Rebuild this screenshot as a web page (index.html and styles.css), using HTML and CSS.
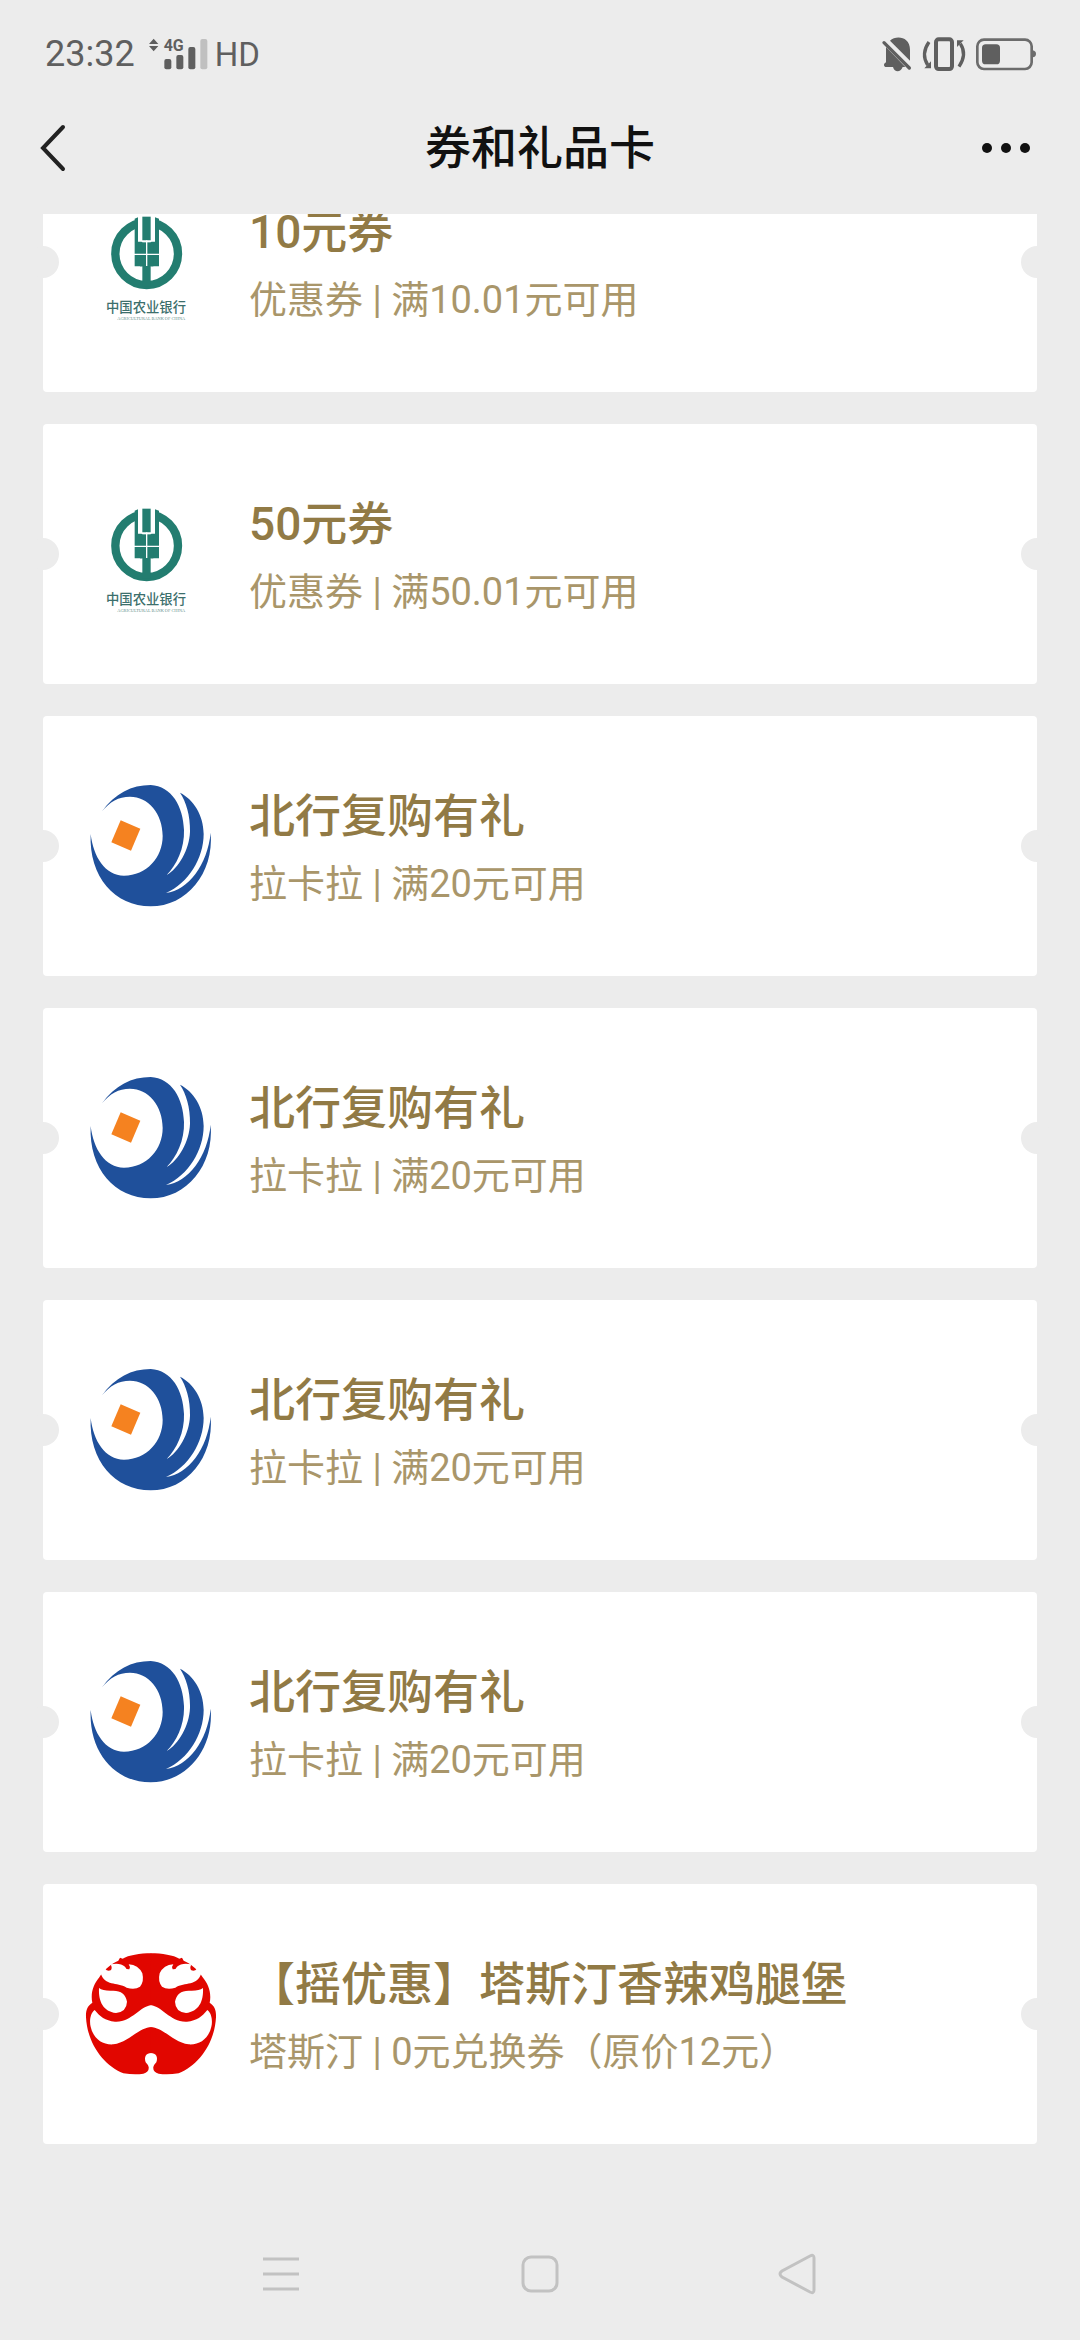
FILE: index.html
```html
<!DOCTYPE html>
<html lang="zh">
<head>
    <meta charset="UTF-8">
    <meta name="viewport" content="width=device-width, initial-scale=1.0">
    <title>券和礼品卡</title>
    <link rel="stylesheet" href="styles.css">
</head>
<body>

    <!-- 卡券图标 -->
    <svg class="sprite" aria-hidden="true">
        <symbol id="logo-abc" viewBox="75 24 396 396">
            <circle cx="260" cy="197" r="94" fill="none" stroke="#237d70" stroke-width="25"/>
            <path fill="#fff" d="M233 78h55v60h-55z"/>
            <path fill="#237d70" d="M224 92l10-4v73h13v74h-23z"/>
            <path fill="#237d70" d="M297 92l-12-4v73h-13v74h25z"/>
            <path fill="#237d70" d="M247 86h25v71h-25z"/>
            <path fill="#237d70" d="M240 163h40v72h-40z"/>
            <path fill="#237d70" d="M247 234h25v61h-25z"/>
            <path fill="none" stroke="#fff" stroke-width="4" d="M260 157v77M222 199h77M245 160h29"/>
            <text x="138" y="373" class="logo-cn">中国农业银行</text>
            <text x="172" y="396" class="logo-en">AGRICULTURAL BANK OF CHINA</text>
        </symbol>
        <symbol id="logo-bank" viewBox="75 60 396 396">
            <path fill="#1f509b" d="M125 155C165 100 215 75 272 75C335 78 370 140 372 210C374 265 350 315 320 345C355 325 388 270 390 215C391 165 378 125 360 98C400 118 431 165 431 222C431 295 385 370 318 399C385 390 442 315 452 218C462 340 380 439 272 439C165 439 86 350 92 222C100 290 135 347 192 347C260 347 308 292 308 228C308 160 265 110 210 110C175 110 150 125 125 155Z"/>
            <path fill="#f58220" d="M182 181L241 206L213 272L154 247Z"/>
        </symbol>
        <symbol id="logo-lion" viewBox="75 54 396 396">
            <g id="lion-face" fill="#e10600">
                <path d="M274 70C240 70 205 76 188 86L180 83L175 92C150 102 125 128 118 142C100 163 91 190 97 218C82 228 77 240 78 262C82 340 130 405 190 430Q225 435 250 431Q268 426 266 411Q264 404 257 397Q253 385 257 377Q262 369 274 369Z"/>
            </g>
            <use href="#lion-face" transform="translate(546 0) scale(-1 1)"/>
            <g id="lion-mask" fill="#fff">
                <path d="M122 130L135 116Q142 125 152 121Q158 115 152 103Q180 97 195 110Q198 119 208 118Q212 110 206 103Q235 105 247 130Q253 155 240 170Q225 180 200 173C170 155 135 170 122 130Z"/>
                <path d="M117 174Q130 184 160 182Q195 182 201 215Q200 245 168 249C130 245 115 215 117 174Z"/>
                <path d="M274 226C240 228 215 278 165 275C135 272 120 260 104 240C90 250 88 275 92 290C100 325 125 345 160 343C205 338 235 293 274 291Z"/>
            </g>
            <use href="#lion-mask" transform="translate(546 0) scale(-1 1)"/>
        </symbol>
    </svg>

    <div class="status-bar">
        <div class="status-left">
            <span class="time">23:32</span>
            <svg class="signal" viewBox="446 114 180 96">
                <path fill="#5f5f5f" d="M446 132l14-16 14 16zM446 138h28l-14 16z"/>
                <text x="490" y="153" class="net">4G</text>
                <rect x="492" y="177" width="21" height="31" rx="6" fill="#5f5f5f"/>
                <rect x="528" y="165" width="21" height="43" rx="6" fill="#5f5f5f"/>
                <rect x="564" y="141" width="21" height="67" rx="6" fill="#5f5f5f"/>
                <rect x="600" y="117" width="21" height="91" rx="6" fill="#c0c0c0"/>
            </svg>
            <span class="hd">HD</span>
        </div>
        <div class="status-right">
            <svg width="30" height="35" viewBox="180 110 90 105">
                <path fill="#5f5f5f" d="M204 121C222 104 264 108 264 148V181ZM192 140L250 200H242Q236 213 227 213Q217 213 213 200H190Q183 196 188 189L192 186Z"/>
                <path stroke="#5f5f5f" stroke-width="10" stroke-linecap="round" d="M186 127L262 203"/>
            </svg>
            <svg width="44" height="35" viewBox="306 110 132 105">
                <rect x="348" y="117" width="48" height="89" rx="8" fill="none" stroke="#5f5f5f" stroke-width="12"/>
                <path fill="none" stroke="#5f5f5f" stroke-width="10" d="M327 125Q302 160 323 194M417 199Q442 162 421 130"/>
                <path fill="#5f5f5f" d="M333 183V204H313ZM411 120H431L411 140Z"/>
            </svg>
            <svg width="61" height="35" viewBox="465 110 183 105">
                <rect x="469" y="118" width="163" height="88" rx="20" fill="none" stroke="#6c6c6c" stroke-width="8"/>
                <rect x="483" y="132" width="54" height="60" rx="11" fill="#5f5f5f"/>
                <path fill="#6c6c6c" d="M635 150Q645 152 645 161Q645 170 635 171Z"/>
            </svg>
        </div>
    </div>

    <header class="header">
        <button class="icon-button" aria-label="返回">
            <svg width="26" height="48" viewBox="0 0 26 48" fill="none" stroke="#222" stroke-width="4" stroke-linecap="round">
                <path d="M23 3L3 24L23 45"/>
            </svg>
        </button>
        <h1>券和礼品卡</h1>
        <button class="icon-button more" aria-label="更多">
            <svg width="50" height="48" viewBox="0 0 50 48" fill="#111">
                <circle cx="6" cy="24" r="5"/>
                <circle cx="25" cy="24" r="5"/>
                <circle cx="44" cy="24" r="5"/>
            </svg>
        </button>
    </header>

    <main class="content">
        <div class="coupon-list">
            <a href="#" class="coupon">
                <svg class="logo"><use href="#logo-abc"/></svg>
                <div class="info">
                    <h2>10元券</h2>
                    <p>优惠券 | 满10.01元可用</p>
                </div>
            </a>
            <a href="#" class="coupon">
                <svg class="logo"><use href="#logo-abc"/></svg>
                <div class="info">
                    <h2>50元券</h2>
                    <p>优惠券 | 满50.01元可用</p>
                </div>
            </a>
            <a href="#" class="coupon">
                <svg class="logo"><use href="#logo-bank"/></svg>
                <div class="info">
                    <h2>北行复购有礼</h2>
                    <p>拉卡拉 | 满20元可用</p>
                </div>
            </a>
            <a href="#" class="coupon">
                <svg class="logo"><use href="#logo-bank"/></svg>
                <div class="info">
                    <h2>北行复购有礼</h2>
                    <p>拉卡拉 | 满20元可用</p>
                </div>
            </a>
            <a href="#" class="coupon">
                <svg class="logo"><use href="#logo-bank"/></svg>
                <div class="info">
                    <h2>北行复购有礼</h2>
                    <p>拉卡拉 | 满20元可用</p>
                </div>
            </a>
            <a href="#" class="coupon">
                <svg class="logo"><use href="#logo-bank"/></svg>
                <div class="info">
                    <h2>北行复购有礼</h2>
                    <p>拉卡拉 | 满20元可用</p>
                </div>
            </a>
            <a href="#" class="coupon">
                <svg class="logo"><use href="#logo-lion"/></svg>
                <div class="info">
                    <h2>【摇优惠】塔斯汀香辣鸡腿堡</h2>
                    <p>塔斯汀 | 0元兑换券（原价12元）</p>
                </div>
            </a>
        </div>
    </main>

    <nav class="nav-bar">
        <button class="icon-button" aria-label="菜单">
            <svg width="40" height="44" viewBox="0 0 40 44"><path d="M2 7H38M2 22H38M2 37H38"/></svg>
        </button>
        <button class="icon-button" aria-label="主页">
            <svg width="40" height="44" viewBox="0 0 40 44"><rect x="3" y="5" width="34" height="34" rx="8"/></svg>
        </button>
        <button class="icon-button" aria-label="后退">
            <svg width="40" height="44" viewBox="0 0 40 44"><path d="M31 4Q35 2 35 6V38Q35 42 31 40L3 25Q-1 22 3 19Z"/></svg>
        </button>
    </nav>

</body>
</html>
```
FILE: styles.css
```css
* {
    box-sizing: border-box;
}
body {
    margin: 0;
    min-height: 100vh;
    display: flex;
    flex-direction: column;
    background: #ececec;
    font-family: Roboto, "Noto Sans CJK SC", sans-serif;
}
h1, h2, p {
    margin: 0;
}
svg {
    display: block;
    flex-shrink: 0;
    overflow: visible;
}
.sprite {
    position: absolute;
    width: 0;
    height: 0;
}
.logo-cn {
    font: 500 40px "Noto Sans CJK SC", sans-serif;
    fill: #3c6f6c;
}
.logo-en {
    font: 400 13px "Liberation Serif", serif;
    fill: #5f8f8a;
}
/* 状态栏 */
.status-bar {
    display: flex;
    justify-content: space-between;
    align-items: center;
    height: 108px;
    padding: 0 43px 0 45px;
    color: #5f5f5f;
}
.status-left,
.status-right {
    display: flex;
    align-items: center;
}
.status-right {
    gap: 10px;
}
.time {
    font-size: 36px;
}
.signal {
    width: 60px;
    height: 32px;
    margin: 0 6px 0 14px;
}
.net {
    font: 700 48px Roboto, sans-serif;
    fill: #5f5f5f;
}
.hd {
    font-size: 33px;
}
/* 标题栏 */
.header {
    display: grid;
    grid-template-columns: 1fr auto 1fr;
    align-items: center;
    height: 80px;
    margin-bottom: 26px;
    padding: 0 49px 0 40px;
}
.header .icon-button {
    justify-self: start;
}
.header .more {
    justify-self: end;
}
.header h1 {
    padding-left: 9px;
    font-size: 46px;
    line-height: 60px;
    font-weight: 500;
    color: #111;
}
.icon-button {
    display: flex;
    padding: 0;
    border: none;
    background: none;
    cursor: pointer;
}
/* 卡券列表，已向下滚动 */
.content {
    overflow: hidden;
}
.coupon-list {
    display: flex;
    flex-direction: column;
    gap: 32px;
    margin-top: -82px;
    padding: 0 43px;
}
.coupon {
    position: relative;
    display: flex;
    align-items: center;
    gap: 32px;
    min-height: 260px;
    padding: 0 42px;
    border-radius: 4px;
    background: #fff;
    text-decoration: none;
}
/* 两侧缺口 */
.coupon::before,
.coupon::after {
    content: "";
    position: absolute;
    top: 50%;
    width: 32px;
    height: 32px;
    margin-top: -16px;
    border-radius: 50%;
    background: #ececec;
}
.coupon::before {
    left: -16px;
}
.coupon::after {
    right: -16px;
}
.logo {
    width: 132px;
    height: 132px;
}
.info {
    padding-top: 8px;
}
.info h2 {
    font-size: 46px;
    line-height: 68px;
    font-weight: 500;
    color: #917a45;
}
.info p {
    font-size: 38px;
    line-height: 68px;
    color: #a9966a;
}
/* 底部导航 */
.nav-bar {
    display: flex;
    height: 132px;
    margin-top: auto;
    padding: 0 14%;
}
.nav-bar .icon-button {
    flex: 1;
    justify-content: center;
    align-items: center;
}
.nav-bar svg {
    fill: none;
    stroke: #c2c2c2;
    stroke-width: 3;
}
```
